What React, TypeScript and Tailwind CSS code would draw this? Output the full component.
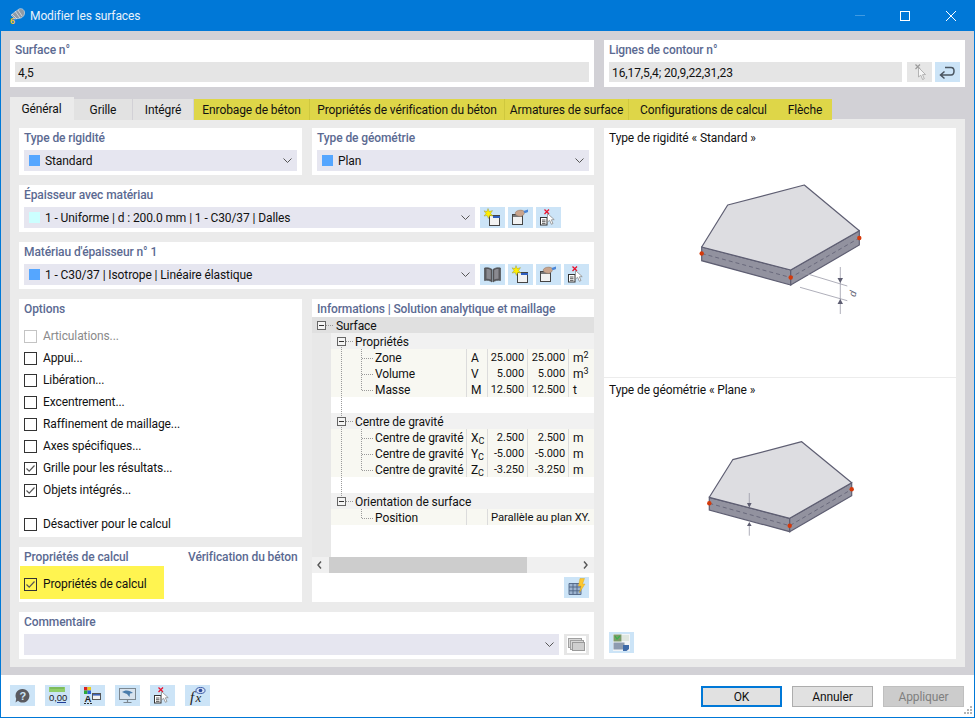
import type { ReactNode } from "react";

const labelCls = "block h-[18px] text-[12px] leading-[20px] font-medium text-[#5b6a92] whitespace-nowrap";

function Swatch({ color = "#55a6ff" }: { color?: string }) {
  return <span className="h-[11px] w-[11px] shrink-0" style={{ background: color }} />;
}

function Chevron() {
  return (
    <svg width="9" height="5" viewBox="0 0 9 5" className="ml-auto shrink-0" fill="none" stroke="#555" strokeWidth="1">
      <path d="M0.5 0.5 L4.5 4.5 L8.5 0.5" />
    </svg>
  );
}

function Dropdown({ text, swatch, className }: { text?: string; swatch?: string; className: string }) {
  return (
    <div className={`flex h-[21px] items-center bg-[#e6e6f0] pl-[5px] pr-[5px] ${className}`}>
      {swatch && <Swatch color={swatch} />}
      {text && <span className="ml-[5px] whitespace-nowrap text-[12px] text-[#111]">{text}</span>}
      <Chevron />
    </div>
  );
}

function IconBtn({ children, grey }: { children: ReactNode; grey?: boolean }) {
  return (
    <div className={`h-[21px] w-[25px] shrink-0 ${grey ? "bg-[#e6e6e6]" : "bg-[#cce4f7]"}`}>
      <svg width="25" height="21" viewBox="0 0 25 21">
        {children}
      </svg>
    </div>
  );
}

function Win({ x, y, blue = true }: { x: number; y: number; blue?: boolean }) {
  return (
    <g>
      <rect x={x + 0.5} y={y + 0.5} width="10" height="10" fill="#f2f2f2" stroke="#444" />
      <rect x={blue ? x + 4 : x + 1} y={y + 1} width={blue ? 7 : 9} height="2" fill={blue ? "#2f5fc0" : "#777"} />
    </g>
  );
}

function NewIcon() {
  return (
    <g>
      <Win x={9} y={8} />
      <path d="M8 1.5 L9.2 4.6 L12.5 3.6 L10.6 6.6 L13 9 L9.8 8.6 L8.4 11.5 L7.2 8.6 L4 9 L6 6.6 L4 3.8 L7 4.6 Z" fill="#ffee00" stroke="#8a8a3a" strokeWidth="0.4" />
    </g>
  );
}

function HandIcon() {
  return (
    <g>
      <Win x={4} y={7} blue={false} />
      <path d="M7 6 C8 3.5 12 2.5 15 3.5 L17 5 L15.5 8 L13 9.5 L10 9 L8 8 Z" fill="#c9a48c" stroke="#8f7767" strokeWidth="0.5" />
      <path d="M15.5 4 C17 3.6 18.5 3.2 20 2.6 L20 5 C18.5 5.6 17.5 6 16.5 6 Z" fill="#4a86d8" />
    </g>
  );
}

function DeleteIcon() {
  return (
    <g>
      <path d="M8.5 2.5 L13 7 M13 2.5 L8.5 7" stroke="#e8112d" strokeWidth="1.3" />
      <rect x="4.5" y="10.5" width="6.5" height="7.5" fill="#fff" stroke="#333" />
      <path d="M6 13 H9.5 M6 14.7 H9.5 M6 16.4 H9.5" stroke="#333" strokeWidth="0.8" />
      <path d="M11.5 6.5 L11.5 15 L13.6 13.3 L15.4 17.3 L17 16.5 L15.3 12.8 L18.2 12.6 Z" fill="#fff" stroke="#8a8a8a" strokeWidth="0.8" />
    </g>
  );
}

function BookIcon() {
  return (
    <g fill="#5a5a5e" stroke="#3f3f42" strokeWidth="0.6">
      <path d="M4.5 4 C7 3.4 10 3.8 12 5.4 V18 C10 16.4 7 16 4.5 16.6 Z" />
      <path d="M20.5 4 C18 3.4 15 3.8 13 5.4 V18 C15 16.4 18 16 20.5 16.6 Z" />
      <path d="M6.5 5 C8 4.8 9.6 5.4 10.8 6.2 V15.6 C9.4 14.8 8 14.6 6.5 14.8 Z" fill="#8a8a90" stroke="none" />
      <path d="M18.5 5 C17 4.8 15.4 5.4 14.2 6.2 V15.6 C15.6 14.8 17 14.6 18.5 14.8 Z" fill="#8a8a90" stroke="none" />
    </g>
  );
}

function PickIcon() {
  return (
    <g>
      <path d="M8.5 2.5 L13 7 M13 2.5 L8.5 7" stroke="#9a9a9a" strokeWidth="1.2" />
      <path d="M11.5 5.5 L11.5 15 L13.8 13.2 L15.6 17.5 L17.3 16.7 L15.5 12.7 L18.5 12.5 Z" fill="#f6f6f6" stroke="#a4a4a4" strokeWidth="0.8" />
    </g>
  );
}

function ReturnIcon() {
  return (
    <path d="M10 5.5 H16 Q19 5.5 19 9 Q19 13 16 13 H6 M9.5 9.5 L5.5 13 L9.5 16.5" fill="none" stroke="#4a5560" strokeWidth="1.5" />
  );
}

function GridBoltIcon() {
  return (
    <g>
      <path d="M5 6.5 H17 V17.5 H5 Z M5 10 H17 M5 13.8 H17 M9 6.5 V17.5 M13 6.5 V17.5" fill="#9db4d0" stroke="#4f6484" strokeWidth="0.9" />
      <path d="M16 1.5 H20.5 L18.5 7 H21 L15.5 15.5 L17 9 H14.5 Z" fill="#fdc82f" stroke="#d69e10" strokeWidth="0.4" />
    </g>
  );
}

function ViewIcon() {
  return (
    <g>
      <rect x="4" y="2" width="17" height="17" fill="#f2f4f6" />
      <rect x="4.5" y="2.5" width="8" height="7" fill="#7c9a6a" />
      <path d="M6 4 L8 7 L11 4" stroke="#38b24a" strokeWidth="1.2" fill="none" />
      <rect x="13" y="3" width="7" height="6" fill="#dfe6df" />
      <rect x="4.5" y="10.5" width="11" height="7" fill="#8d9bb0" />
      <path d="M14 13 H20 V17 L17.5 19 H14 Z" fill="#3e6aa8" />
    </g>
  );
}

function CopyIcon() {
  return (
    <g>
      <rect x="3" y="2" width="19" height="17" fill="#ffffff" />
      <rect x="4.5" y="4.5" width="13" height="9" fill="#d8d8d8" stroke="#a0a0a0" />
      <rect x="6.5" y="6.5" width="13" height="9" fill="#d8d8d8" stroke="#a0a0a0" />
      <rect x="8.5" y="8.5" width="12" height="8" fill="#cfcfcf" stroke="#9a9a9a" />
    </g>
  );
}

function HelpIcon() {
  return (
    <g>
      <path d="M12.5 4 A6.8 6.8 0 1 1 8 15.8 L5.5 17.5 L6.2 13.8 A6.8 6.8 0 0 1 12.5 4 Z" fill="#5a5a60" />
      <text x="12.7" y="14.6" textAnchor="middle" fontSize="11" fontWeight="700" fill="#cce4f7" fontFamily="'Liberation Sans', sans-serif">?</text>
    </g>
  );
}

function DecimalIcon() {
  return (
    <g>
      <rect x="4" y="2" width="16" height="5" fill="#8fce6a" />
      <path d="M6 2 V4 M8 2 V4 M10 2 V4 M12 2 V4 M14 2 V4 M16 2 V4 M18 2 V4" stroke="#5d9a40" strokeWidth="0.7" />
      <text x="4" y="15.5" fontSize="9.5" fill="#222" fontFamily="'Liberation Sans', sans-serif">0,00</text>
      <path d="M12 17.5 H21" stroke="#1f3f9a" strokeWidth="1" />
    </g>
  );
}

function ColorsIcon() {
  return (
    <g>
      <rect x="4" y="2" width="3.5" height="3.5" fill="#d92020" />
      <rect x="7.5" y="2" width="3.5" height="3.5" fill="#e8c820" />
      <rect x="4" y="5.5" width="3.5" height="3.5" fill="#2bab3a" />
      <rect x="7.5" y="5.5" width="3.5" height="3.5" fill="#2b5fd8" />
      <text x="4.5" y="17" fontSize="9.5" fontWeight="700" fill="#222" fontFamily="'Liberation Sans', sans-serif">A</text>
      <rect x="12.5" y="8.5" width="8" height="6" fill="#f2f2f2" stroke="#555" />
      <rect x="13" y="9" width="7" height="1.6" fill="#3c62b8" />
      <path d="M4 18.5 H12" stroke="#333" strokeWidth="1" strokeDasharray="2 1" />
    </g>
  );
}

function MonitorIcon() {
  return (
    <g>
      <rect x="4.5" y="3.5" width="16" height="11" fill="#d8e3ee" stroke="#7c8790" />
      <path d="M7 7 C10 4.5 15 5 18 8 L15 8.5 L14.5 12 L12 9 C10 8.2 8.5 8 7 7 Z" fill="#4a7cab" />
      <path d="M12.5 14.5 V17 M8.5 17.5 H16.5" stroke="#7c8790" strokeWidth="1.2" />
    </g>
  );
}

function FxIcon() {
  return (
    <g>
      <text x="5" y="17" fontSize="15" fontStyle="italic" fill="#222" fontFamily="'Liberation Serif', serif">f</text>
      <text x="10.5" y="17" fontSize="13" fontStyle="italic" fill="#222" fontFamily="'Liberation Serif', serif">x</text>
      <ellipse cx="15.5" cy="5.5" rx="4.5" ry="3" fill="#d7e3f5" stroke="#3b5aa8" />
      <circle cx="15.5" cy="5.5" r="1.8" fill="#2c4a9a" />
    </g>
  );
}

function Check({ checked, disabled }: { checked?: boolean; disabled?: boolean }) {
  return (
    <span className={`flex h-[13px] w-[13px] shrink-0 items-center justify-center border bg-white ${disabled ? "border-[#c4c4c4]" : "border-[#333]"}`}>
      {checked && (
        <svg width="11" height="11" viewBox="0 0 11 11" fill="none" stroke="#555" strokeWidth="1.2">
          <path d="M1.5 5.5 L4.2 8.2 L9.5 2.5" />
        </svg>
      )}
    </span>
  );
}

function Option({ text, checked, disabled, className = "" }: { text: string; checked?: boolean; disabled?: boolean; className?: string }) {
  return (
    <div className={`flex h-[22px] items-center gap-[6px] ${className}`}>
      <Check checked={checked} disabled={disabled} />
      <span className={`whitespace-nowrap text-[12px] ${disabled ? "text-[#8a8a8a]" : "text-[#111]"}`}>{text}</span>
    </div>
  );
}

const tabs = [
  { name: "Général", w: "w-[64px]", active: true },
  { name: "Grille", w: "w-[59px]" },
  { name: "Intégré", w: "w-[61px]" },
  { name: "Enrobage de béton", w: "w-[116px]", y: true, sep: true },
  { name: "Propriétés de vérification du béton", w: "w-[195px]", y: true, sep: true },
  { name: "Armatures de surface", w: "w-[124px]", y: true, sep: true },
  { name: "Configurations de calcul", w: "w-[149px]", y: true },
  { name: "Flèche", w: "w-[54px]", y: true },
];

type Leaf = { label: string; sym: ReactNode; a?: string; b?: string; unit?: ReactNode; wide?: string };

function Sec({ label }: { label: string }) {
  return <div className="h-[16px] bg-[#f1f1f1] pl-[24px] text-[12px] leading-[18px] text-[#111]">{label}</div>;
}

function LeafRow({ label, sym, a, b, unit, wide }: Leaf) {
  return (
    <div className="grid h-[16px] grid-cols-[135px_21px_40px_41px_26px] bg-[#f8f8f2] text-[12px] leading-[18px] text-[#111]">
      <span className="whitespace-nowrap pl-[44px]">{label}</span>
      <span className="h-[16px] border-l border-[#dcdcdc] pl-[4px]">{sym}</span>
      {wide ? (
        <span className="col-span-3 h-[16px] whitespace-nowrap border-l border-[#dcdcdc] pl-[3px] text-[11.3px]">{wide}</span>
      ) : (
        <>
          <span className="h-[16px] border-l border-[#dcdcdc] pr-[3px] text-right text-[11px]">{a}</span>
          <span className="h-[16px] border-l border-[#dcdcdc] pr-[3px] text-right text-[11px]">{b}</span>
          <span className="h-[16px] whitespace-nowrap border-l border-[#dcdcdc] pl-[4px]">{unit}</span>
        </>
      )}
    </div>
  );
}

function Sub({ a, b }: { a: string; b: string }) {
  return (
    <>
      {a}
      <span className="relative top-[2px] text-[9px]">{b}</span>
    </>
  );
}

function Pow({ a, b }: { a: string; b: string }) {
  return (
    <>
      {a}
      <span className="relative -top-[4px] text-[9px]">{b}</span>
    </>
  );
}

function Toggle({ x, y }: { x: number; y: number }) {
  return (
    <g>
      <rect x={x + 0.5} y={y + 0.5} width="8" height="8" fill="#f4f4f4" stroke="#666" />
      <path d={`M${x + 2} ${y + 4.5} H${x + 7}`} stroke="#333" />
    </g>
  );
}

function TreeLines() {
  const h = (x1: number, x2: number, y: number) => `M${x1} ${y + 0.5} H${x2}`;
  const d = [
    "M341.5 345 V497",
    "M361.5 349 V390",
    "M361.5 429 V470",
    "M361.5 509 V518",
    h(326, 334, 325),
    h(346, 354, 341),
    h(346, 354, 421),
    h(346, 354, 501),
    ...[358, 374, 390, 438, 454, 470, 518].map((y) => h(362, 373, y)),
  ].join(" ");
  return (
    <svg className="pointer-events-none absolute left-0 top-0" width="282" height="240" viewBox="312 317 282 240">
      <path d={d} fill="none" stroke="#9a9a9a" strokeDasharray="1 1" />
      <Toggle x={317} y={321} />
      <Toggle x={337} y={337} />
      <Toggle x={337} y={417} />
      <Toggle x={337} y={497} />
    </svg>
  );
}

function Slab({ vb, children, pts }: { vb: string; children: ReactNode; pts: { top: string; left: string; right: string; mid: string; dots: number[][] } }) {
  return (
    <svg width="352" height="230" viewBox={vb} className="block">
      <path d={pts.left} fill="#92929f" stroke="#5e5e72" strokeWidth="1.2" />
      <path d={pts.right} fill="#92929f" stroke="#5e5e72" strokeWidth="1.2" />
      <path d={pts.top} fill="#dddde1" stroke="#5e5e72" strokeWidth="1.2" strokeLinejoin="round" />
      <path d={pts.mid} fill="none" stroke="#5e5e72" strokeWidth="0.8" strokeDasharray="4 3" />
      {pts.dots.map(([x, y]) => (
        <circle key={x} cx={x} cy={y} r="2.2" fill="#d5390a" />
      ))}
      {children}
    </svg>
  );
}

export default function App() {
  return (
    <div className="relative flex h-[718px] w-[975px] flex-col overflow-hidden border border-t-0 border-[#0078d7] bg-white font-['Roboto',sans-serif] tracking-[-0.1px]">
      {/* title bar */}
      <div className="-mx-px flex h-[31px] shrink-0 items-center bg-[#0078d7] pl-[9px]">
        <svg width="17" height="17" viewBox="0 0 17 17">
          <path d="M2 8 L10 2 C12 1 15 2 15.5 5 C16 8 14 10 12 11 L6 12 Z" fill="#8f9aa6" stroke="#dfe5ea" strokeWidth="0.6" />
          <path d="M6 4 L11 11 M9 3 L13 9 M3 7 L8 12" stroke="#e8edf2" strokeWidth="0.7" />
          <text x="1" y="16.5" fontSize="9" fontWeight="700" fill="#f2c230" fontFamily="'Liberation Sans', sans-serif">6</text>
        </svg>
        <span className="ml-[4px] text-[12px] text-[#e8f2fb]">Modifier les surfaces</span>
        <div className="ml-auto flex items-center pr-[19px]">
          <span className="h-px w-[10px] bg-[#3f9ae2]" />
          <span className="ml-[35px] h-[10px] w-[10px] border border-white" />
          <svg width="10" height="10" viewBox="0 0 10 10" className="ml-[36px]" stroke="#fff" fill="none">
            <path d="M0 0 L10 10 M10 0 L0 10" />
          </svg>
        </div>
      </div>

      {/* main */}
      <div className="flex h-[644px] shrink-0 flex-col bg-[#d2d1d6] pb-[8px] pl-[9px] pr-[9px] pt-[9px]">
        <div className="flex gap-[10px]">
          <div className="h-[47px] w-[584px] bg-white px-[5px]">
            <span className={labelCls}>Surface n°</span>
            <div className="mt-[4px] flex h-[20px] items-center bg-[#e5e5e5] pl-[3px] pt-px text-[12px] text-[#111]">4,5</div>
          </div>
          <div className="h-[47px] w-[361px] bg-white px-[5px]">
            <span className={labelCls}>Lignes de contour n°</span>
            <div className="mt-[4px] flex h-[20px] gap-[3px]">
              <div className="mr-[2px] flex w-[293px] items-center bg-[#e5e5e5] pl-[3px] pt-px text-[12px] text-[#111]">16,17,5,4; 20,9,22,31,23</div>
              <div className="h-[20px] w-[25px] bg-[#e6e6e6]">
                <svg width="25" height="20" viewBox="0 0 25 20"><PickIcon /></svg>
              </div>
              <div className="h-[20px] w-[25px] bg-[#cce4f7]">
                <svg width="25" height="20" viewBox="0 0 25 20"><ReturnIcon /></svg>
              </div>
            </div>
          </div>
        </div>

        {/* tabs */}
        <div className="relative z-10 mt-[10px] flex h-[23px] items-end">
          {tabs.map((t) => (
            <div
              key={t.name}
              className={`${t.w} flex shrink-0 items-center justify-center whitespace-nowrap pt-px text-[12px] text-[#111] ${
                t.active
                  ? "h-[23px] bg-[#ebebeb] pr-px"
                  : t.y
                    ? `h-[21px] bg-[#ded648] ${t.sep ? "border-r border-[#cfc83e]" : ""}`
                    : "h-[21px] border-r border-[#d2d1d6] bg-[#e2e2e2]"
              }`}
            >
              {t.name}
            </div>
          ))}
        </div>

        {/* tab body */}
        <div className="-mt-px flex flex-1 gap-[10px] bg-[#ebebeb] pb-[8px] pl-[9px] pr-[9px] pt-[9px]">
          <div className="flex w-[575px] flex-col gap-[10px]">
            <div className="flex gap-[10px]">
              <div className="h-[47px] w-[283px] bg-white px-[5px]">
                <span className={labelCls}>Type de rigidité</span>
                <Dropdown className="mt-[4px]" swatch="#55a6ff" text="Standard" />
              </div>
              <div className="h-[47px] w-[282px] bg-white px-[5px]">
                <span className={labelCls}>Type de géométrie</span>
                <Dropdown className="mt-[4px]" swatch="#55a6ff" text="Plan" />
              </div>
            </div>

            <div className="h-[47px] bg-white px-[5px]">
              <span className={labelCls}>Épaisseur avec matériau</span>
              <div className="mt-[4px] flex gap-[3px]">
                <Dropdown className="mr-[2px] w-[451px]" swatch="#ccffff" text="1 - Uniforme | d : 200.0 mm | 1 - C30/37 | Dalles" />
                <IconBtn><NewIcon /></IconBtn>
                <IconBtn><HandIcon /></IconBtn>
                <IconBtn><DeleteIcon /></IconBtn>
              </div>
            </div>

            <div className="h-[47px] bg-white px-[5px]">
              <span className={labelCls}>Matériau d'épaisseur n° 1</span>
              <div className="mt-[4px] flex gap-[3px]">
                <Dropdown className="mr-[2px] w-[451px]" swatch="#55a6ff" text="1 - C30/37 | Isotrope | Linéaire élastique" />
                <IconBtn><BookIcon /></IconBtn>
                <IconBtn><NewIcon /></IconBtn>
                <IconBtn><HandIcon /></IconBtn>
                <IconBtn><DeleteIcon /></IconBtn>
              </div>
            </div>

            <div className="flex h-[303px] gap-[10px]">
              <div className="flex w-[283px] flex-col gap-[10px]">
                <div className="h-[238px] bg-white px-[5px]">
                  <span className={labelCls}>Options</span>
                  <div className="mt-[8px]">
                    <Option text="Articulations..." disabled />
                    <Option text="Appui..." />
                    <Option text="Libération..." />
                    <Option text="Excentrement..." />
                    <Option text="Raffinement de maillage..." />
                    <Option text="Axes spécifiques..." />
                    <Option text="Grille pour les résultats..." checked />
                    <Option text="Objets intégrés..." checked />
                    <Option text="Désactiver pour le calcul" className="mt-[12px]" />
                  </div>
                </div>
                <div className="h-[55px] bg-white">
                  <div className="flex pl-[5px]">
                    <span className={`${labelCls} w-[164px]`}>Propriétés de calcul</span>
                    <span className={labelCls}>Vérification du béton</span>
                  </div>
                  <div className="ml-px mt-px flex h-[33px] w-[144px] items-center gap-[6px] bg-[#fff450] pl-[4px] pt-[3px]">
                    <span className="flex h-[13px] w-[13px] shrink-0 items-center justify-center border border-[#333]">
                      <svg width="11" height="11" viewBox="0 0 11 11" fill="none" stroke="#555" strokeWidth="1.2">
                        <path d="M1.5 5.5 L4.2 8.2 L9.5 2.5" />
                      </svg>
                    </span>
                    <span className="whitespace-nowrap text-[12px] text-[#111]">Propriétés de calcul</span>
                  </div>
                </div>
              </div>

              <div className="flex w-[282px] flex-col bg-white">
                <span className={`${labelCls} pl-[5px]`}>Informations | Solution analytique et maillage</span>
                <div className="relative h-[240px] overflow-hidden">
                  <div className="h-[16px] bg-[#e0e0e0] pl-[24px] text-[12px] leading-[18px] text-[#111]">Surface</div>
                  <div className="flex h-[224px]">
                    <div className="w-[19px] shrink-0 bg-[#e8e8e8]" />
                    <div className="flex-1">
                      <Sec label="Propriétés" />
                      <LeafRow label="Zone" sym="A" a="25.000" b="25.000" unit={<Pow a="m" b="2" />} />
                      <LeafRow label="Volume" sym="V" a="5.000" b="5.000" unit={<Pow a="m" b="3" />} />
                      <LeafRow label="Masse" sym="M" a="12.500" b="12.500" unit="t" />
                      <div className="h-[16px]" />
                      <Sec label="Centre de gravité" />
                      <LeafRow label="Centre de gravité" sym={<Sub a="X" b="C" />} a="2.500" b="2.500" unit="m" />
                      <LeafRow label="Centre de gravité" sym={<Sub a="Y" b="C" />} a="-5.000" b="-5.000" unit="m" />
                      <LeafRow label="Centre de gravité" sym={<Sub a="Z" b="C" />} a="-3.250" b="-3.250" unit="m" />
                      <div className="h-[16px]" />
                      <Sec label="Orientation de surface" />
                      <LeafRow label="Position" sym="" wide="Parallèle au plan XY." />
                    </div>
                  </div>
                  <TreeLines />
                </div>
                <div className="flex h-[16px] items-center bg-[#f0f0f0]">
                  <svg width="17" height="16" viewBox="0 0 17 16" fill="none" stroke="#555" strokeWidth="1.4">
                    <path d="M9 4.5 L6 8 L9 11.5" />
                  </svg>
                  <div className="h-full w-[198px] bg-[#cdcdcd]" />
                  <svg width="17" height="16" viewBox="0 0 17 16" className="ml-auto" fill="none" stroke="#555" strokeWidth="1.4">
                    <path d="M7 4.5 L10 8 L7 11.5" />
                  </svg>
                </div>
                <div className="flex justify-end pr-[5px] pt-[4px]">
                  <IconBtn><GridBoltIcon /></IconBtn>
                </div>
              </div>
            </div>

            <div className="h-[47px] bg-white px-[5px]">
              <span className={labelCls}>Commentaire</span>
              <div className="mt-[4px] flex gap-[5px]">
                <Dropdown className="w-[535px]" />
                <IconBtn grey><CopyIcon /></IconBtn>
              </div>
            </div>
          </div>

          {/* previews */}
          <div className="flex w-[352px] flex-col bg-white">
            <div className="h-[250px] border-b border-[#ececec]">
              <div className="h-[20px] pl-[5px] text-[12px] leading-[21px] text-[#111]">Type de rigidité « Standard »</div>
              <Slab
                vb="604 148 352 230"
                pts={{
                  top: "M727.7 205 L804.3 185 L859.3 230.7 L790.7 270 L701.7 247 Z",
                  left: "M701.7 247 L790.7 270 V285 L701.7 260.7 Z",
                  right: "M790.7 270 L859.3 230.7 V245 L790.7 285 Z",
                  mid: "M701.7 253.5 L790.7 277.5 L859.3 238",
                  dots: [[701.7, 253.5], [790.7, 277.5], [859.3, 238]],
                }}
              >
                <path d="M800 271.7 L847.3 286 M800 287.3 L847.3 300.7 M840.3 267 V314" stroke="#9a9aa8" strokeWidth="0.8" fill="none" />
                <path d="M837.5 278 H843 L840.3 283 Z M837.5 304 H843 L840.3 299 Z" fill="#5e5e72" />
                <text x="853.5" y="294" fontSize="10" fontStyle="italic" fill="#5e5e72" textAnchor="middle" dominantBaseline="middle" transform="rotate(-75 853.5 294)" fontFamily="'Liberation Sans', sans-serif">d</text>
              </Slab>
            </div>
            <div className="h-[20px] pl-[5px] pt-px text-[12px] leading-[22px] text-[#111]">Type de géométrie « Plane »</div>
            <Slab
              vb="604 399 352 230"
              pts={{
                top: "M732.7 460.7 L801.7 442.7 L851.7 483.7 L789.7 519.3 L709.3 498.3 Z",
                left: "M709.3 498.3 L789.7 519.3 V532.7 L709.3 511 Z",
                right: "M789.7 519.3 L851.7 483.7 V496.7 L789.7 532.7 Z",
                mid: "M709.3 504.3 L789.7 526.7 L851.7 490.3",
                dots: [[709.3, 504.3], [789.7, 526.7], [851.7, 490.3]],
              }}
            >
              <path d="M749.3 494 V505 M749.3 526 V536.7" stroke="#9a9aa8" strokeWidth="0.8" fill="none" />
              <path d="M747 504 H751.6 L749.3 508.7 Z M747 527 H751.6 L749.3 523 Z" fill="#5e5e72" />
            </Slab>
            <div className="pl-[5px] pt-[4px]">
              <IconBtn><ViewIcon /></IconBtn>
            </div>
          </div>
        </div>
      </div>

      {/* footer */}
      <div className="flex flex-1 items-start pl-[9px] pr-[10px] pt-[10px]">
        <div className="flex gap-[10px]">
          <IconBtn><HelpIcon /></IconBtn>
          <IconBtn><DecimalIcon /></IconBtn>
          <IconBtn><ColorsIcon /></IconBtn>
          <IconBtn><MonitorIcon /></IconBtn>
          <IconBtn><DeleteIcon /></IconBtn>
          <IconBtn><FxIcon /></IconBtn>
        </div>
        <div className="ml-auto mt-px flex gap-[10px]">
          <button type="button" className="h-[21px] w-[81px] border-2 border-[#0078d7] bg-[#e1e1e1] text-[12px] leading-none text-[#111]">OK</button>
          <button type="button" className="h-[21px] w-[81px] border border-[#adadad] bg-[#e1e1e1] text-[12px] leading-none text-[#111]">Annuler</button>
          <button type="button" className="h-[21px] w-[81px] border border-[#bfbfbf] bg-[#cccccc] text-[12px] leading-none text-[#7f7f7f]">Appliquer</button>
        </div>
      </div>
      <svg width="10" height="9" viewBox="0 0 10 9" className="absolute bottom-[2px] right-[1px]" fill="#b4b4b4">
        <rect x="7" y="0" width="2" height="2" />
        <rect x="4" y="3" width="2" height="2" />
        <rect x="7" y="3" width="2" height="2" />
        <rect x="1" y="6" width="2" height="2" />
        <rect x="4" y="6" width="2" height="2" />
        <rect x="7" y="6" width="2" height="2" />
      </svg>
    </div>
  );
}
